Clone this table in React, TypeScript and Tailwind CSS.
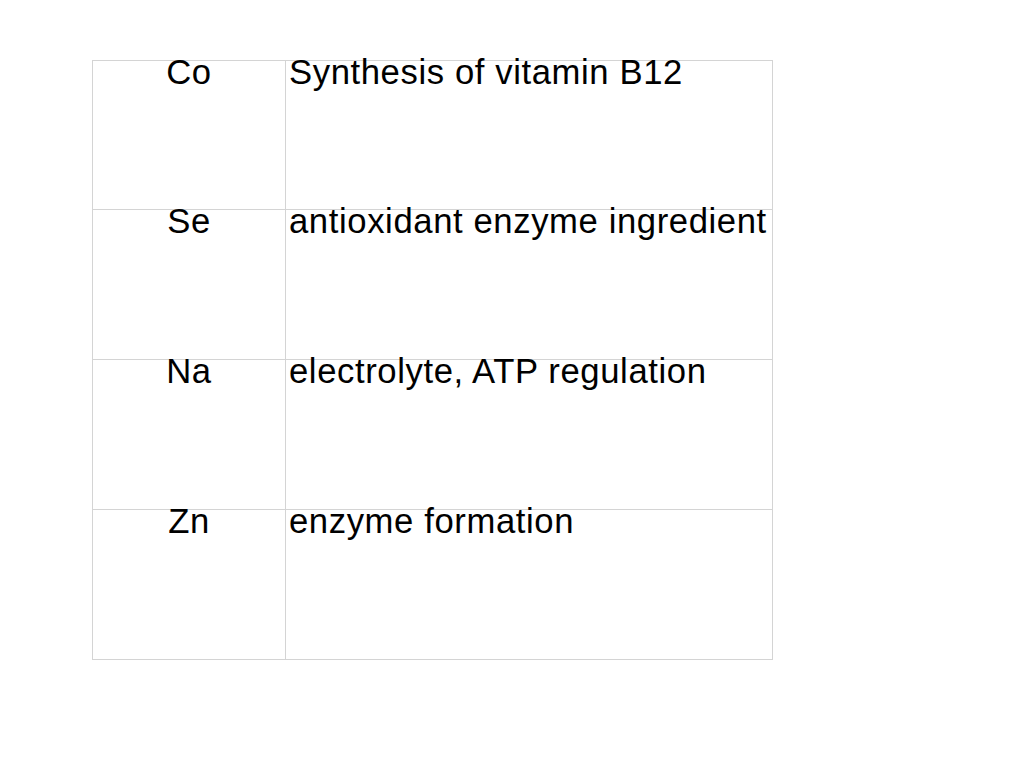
const rows = [
  { el: "Co", role: "Synthesis of vitamin B12", h: "h-[149px]" },
  { el: "Se", role: "antioxidant enzyme ingredient", h: "h-[150px]" },
  { el: "Na", role: "electrolyte, ATP regulation", h: "h-[150px]" },
  { el: "Zn", role: "enzyme formation", h: "h-[150px]" },
];

export default function App() {
  return (
    <div className="w-[1024px] h-[768px] bg-white pt-[60px] pl-[92px] font-['Liberation_Sans',Arial,sans-serif] text-black">
      <div className="w-[681px] border-l border-t border-[#d4d4d4]">
        {rows.map((r) => (
          <div key={r.el} className={`grid grid-cols-[193px_487px] ${r.h}`}>
            <div className="border-r border-b border-[#d4d4d4] text-center text-[34.67px] leading-[22px] tracking-[0.6px] whitespace-nowrap">
              {r.el}
            </div>
            <div className="border-r border-b border-[#d4d4d4] pl-[3px] text-[34.67px] leading-[22px] tracking-[0.6px] whitespace-nowrap">
              {r.role}
            </div>
          </div>
        ))}
      </div>
    </div>
  );
}
